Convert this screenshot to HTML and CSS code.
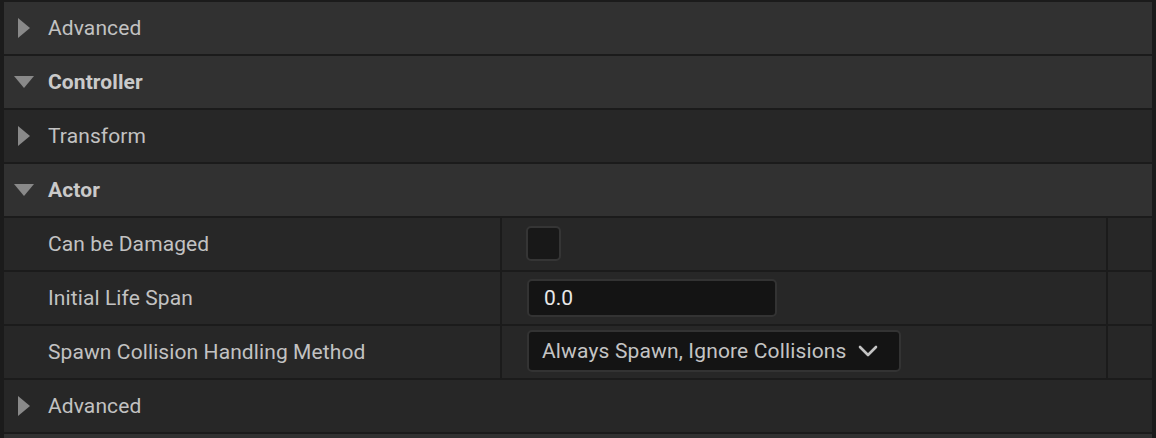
FILE: index.html
```html
<!DOCTYPE html>
<html>
<head>
<meta charset="utf-8">
<link rel="stylesheet" href="styles.css">
</head>
<body>
<div class="panel">
  <div class="row cat light">
    <span class="arrow right"></span><span class="label">Advanced</span>
  </div>
  <div class="row cat light">
    <span class="arrow down"></span><span class="label bold">Controller</span>
  </div>
  <div class="row cat dark">
    <span class="arrow right"></span><span class="label">Transform</span>
  </div>
  <div class="row cat light">
    <span class="arrow down"></span><span class="label bold">Actor</span>
  </div>
  <div class="prop">
    <div class="cell name"><span class="label">Can be Damaged</span></div>
    <div class="cell value"><span class="checkbox"></span></div>
    <div class="cell extra"></div>
  </div>
  <div class="prop">
    <div class="cell name"><span class="label">Initial Life Span</span></div>
    <div class="cell value"><span class="input">0.0</span></div>
    <div class="cell extra"></div>
  </div>
  <div class="prop">
    <div class="cell name"><span class="label">Spawn Collision Handling Method</span></div>
    <div class="cell value">
      <span class="combo"><span class="combo-text">Always Spawn, Ignore Collisions</span>
        <svg class="chev" width="20" height="12" viewBox="0 0 20 12"><path d="M2 2 L10 10 L18 2" fill="none" stroke="#c4c4c4" stroke-width="2.6" stroke-linecap="round" stroke-linejoin="round"/></svg>
      </span>
    </div>
    <div class="cell extra"></div>
  </div>
  <div class="row cat dark">
    <span class="arrow right"></span><span class="label">Advanced</span>
  </div>
  <div class="row cat light"></div>
</div>
</body>
</html>
```
FILE: styles.css
```css
html, body {
  margin: 0;
  padding: 0;
  background: #1b1b1b;
}
body {
  height: 438px;
  overflow: hidden;
  font-family: Roboto, "Liberation Sans", sans-serif;
  font-size: 21px;
  color: #c2c2c2;
}
.panel {
  display: flex;
  flex-direction: column;
  gap: 2px;
  padding: 2px 4px 0 4px;
}
.row {
  height: 52px;
  display: flex;
  align-items: center;
  flex-shrink: 0;
}
.light { background: #313131; }
.dark { background: #272727; }
.label {
  line-height: 24px;
  letter-spacing: 0.1px;
}
.bold {
  font-weight: 700;
  color: #cacaca;
}
.arrow {
  width: 44px;
  height: 20px;
  position: relative;
  flex-shrink: 0;
}
.arrow.right::before {
  content: "";
  position: absolute;
  left: 14px;
  top: 0;
  width: 0;
  height: 0;
  border-top: 10px solid transparent;
  border-bottom: 10px solid transparent;
  border-left: 12px solid #898989;
}
.arrow.down::before {
  content: "";
  position: absolute;
  left: 10px;
  top: 4px;
  width: 0;
  height: 0;
  border-left: 10px solid transparent;
  border-right: 10px solid transparent;
  border-top: 12px solid #898989;
}
.prop {
  height: 52px;
  display: flex;
  gap: 2px;
  flex-shrink: 0;
}
.cell {
  background: #272727;
  display: flex;
  align-items: center;
}
.name {
  width: 452px;
  padding-left: 44px;
}
.value {
  width: 580px;
  padding-left: 24px;
}
.extra {
  width: 44px;
}
.checkbox {
  width: 31px;
  height: 31px;
  border: 2px solid #353535;
  border-radius: 5px;
  background: #181818;
  margin-top: -1px;
}
.input {
  box-sizing: border-box;
  width: 250px;
  height: 38px;
  border: 2px solid #333333;
  border-radius: 5px;
  background: #141414;
  color: #e8e8e8;
  padding-left: 15px;
  display: flex;
  align-items: center;
  margin-left: 1px;
}
.combo {
  box-sizing: border-box;
  width: 374px;
  height: 42px;
  border: 2px solid #333333;
  border-radius: 5px;
  background: #141414;
  color: #c4c4c4;
  padding-left: 13px;
  display: flex;
  align-items: center;
  gap: 11px;
  margin-left: 1px;
  margin-top: -2px;
}
.combo-text {
  letter-spacing: 0.15px;
}
.chev {
  display: block;
}
```
